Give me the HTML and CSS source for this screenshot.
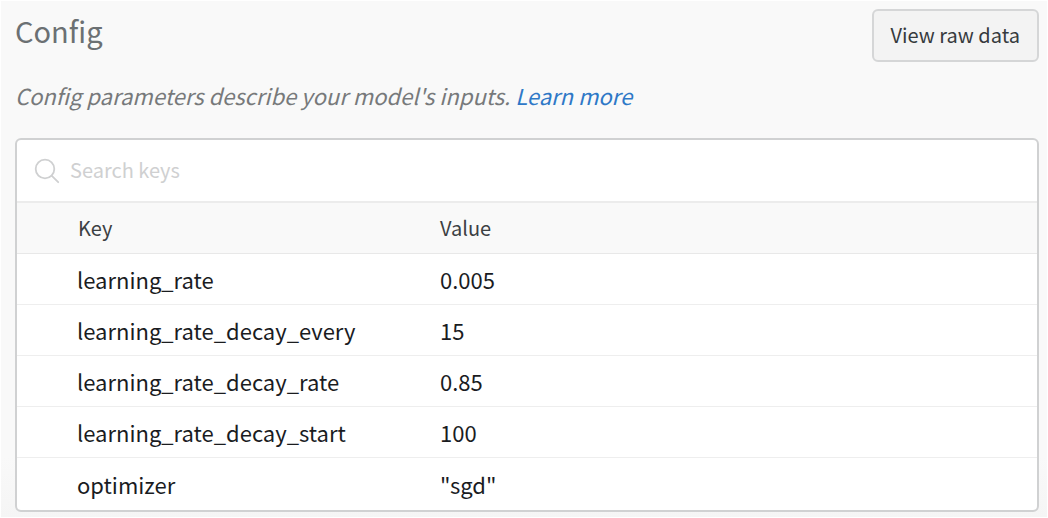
FILE: index.html
```html
<!DOCTYPE html>
<html lang="en">
<head>
<meta charset="utf-8">
<title>Config</title>
<link rel="stylesheet" href="styles.css">
</head>
<body>
<main class="panel">
  <header class="panel-header">
    <h1 class="title">Config</h1>
    <button class="raw-button" type="button">View raw data</button>
  </header>
  <p class="intro">Config parameters describe your model's inputs. <a class="link" href="#learn">Learn more</a></p>
  <section class="card">
    <label class="search">
      <svg class="search-icon" viewBox="0 0 26 26" aria-hidden="true"><circle cx="11" cy="11" r="9.3"/><path d="M17.6 17.6L24.2 24.2"/></svg>
      <input class="search-input" type="text" placeholder="Search keys" aria-label="Search keys">
    </label>
    <table class="table">
      <thead><tr><th class="key" scope="col">Key</th><th scope="col">Value</th></tr></thead>
      <tbody>
        <tr><td class="key">learning_rate</td><td>0.005</td></tr>
        <tr><td class="key">learning_rate_decay_every</td><td>15</td></tr>
        <tr><td class="key">learning_rate_decay_rate</td><td>0.85</td></tr>
        <tr><td class="key">learning_rate_decay_start</td><td>100</td></tr>
        <tr><td class="key">optimizer</td><td>"sgd"</td></tr>
      </tbody>
    </table>
  </section>
</main>
</body>
</html>
```
FILE: styles.css
```css
* { box-sizing: border-box; }
body {
  margin: 0;
  background: #fff;
  font-family: "Noto Sans CJK SC", "Noto Sans", sans-serif;
  color: #1a1c1f;
}
.panel {
  margin: 1px;
  padding: 8px 8px 5px 14px;
  background: linear-gradient(to top, #f5f5f5, #f9f9f9 60px);
}
.panel-header {
  display: flex;
  justify-content: space-between;
  align-items: flex-start;
}
.title {
  margin: 0;
  font-size: 29px;
  line-height: 42px;
  font-weight: 400;
  color: #6b7073;
}
.raw-button {
  height: 53px;
  padding: 0 17px 2px;
  border: 2px solid #d5d6d7;
  border-radius: 6px;
  background: #f3f3f3;
  font-family: inherit;
  font-size: 20px;
  color: #363a3d;
}
.intro {
  margin: 14px 0 24px;
  font-size: 22px;
  line-height: 38px;
  font-style: italic;
  color: #77797b;
}
.link { color: #2e78c7; text-decoration: none; }
.card {
  border: 2px solid #d0d1d2;
  border-radius: 6px;
  background: #fff;
  overflow: hidden;
}
.search {
  display: flex;
  align-items: center;
  gap: 10px;
  height: 61px;
  padding: 0 17px;
}
.search-icon {
  flex: none;
  width: 26px;
  height: 26px;
  fill: none;
  stroke: #cfd0d1;
  stroke-width: 1.8;
  stroke-linecap: round;
}
.search-input {
  flex: 1;
  min-width: 0;
  padding: 0 0 2px;
  border: 0;
  outline: 0;
  background: transparent;
  font-family: inherit;
  font-size: 20px;
  color: inherit;
}
.search-input::placeholder { color: #cfd0d1; opacity: 1; }
.table {
  width: 100%;
  border-collapse: separate;
  border-spacing: 0;
  table-layout: fixed;
}
th, td {
  padding: 0;
  text-align: left;
  font-weight: 400;
}
th {
  height: 53px;
  border-top: 2px solid #ececec;
  border-bottom: 1px solid #e8e8e8;
  background: #f9f9f9;
  font-size: 20px;
  line-height: 24px;
  color: #3c4043;
}
td {
  height: 51px;
  padding-bottom: 1px;
  border-bottom: 1px solid #eee;
  font-size: 22px;
  line-height: 28px;
}
tr:last-child td { height: 52px; border-bottom: 0; }
.key { width: 423px; padding-left: 60px; }
thead .key { padding-left: 61px; }
```
